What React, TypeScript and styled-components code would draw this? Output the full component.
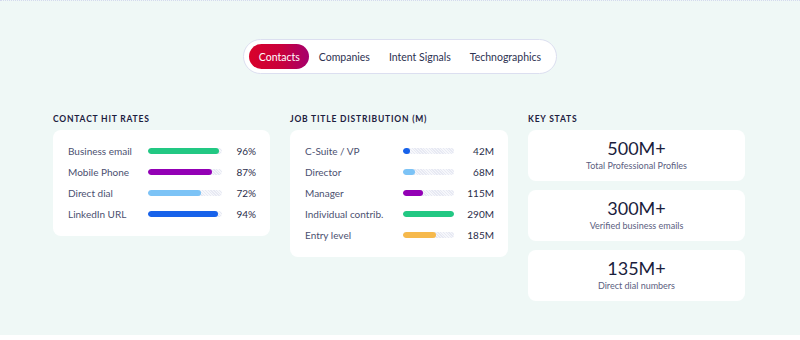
import React from 'react'
import styled, { createGlobalStyle } from 'styled-components'

const GlobalStyle = createGlobalStyle`
  * { box-sizing: border-box; }
  body {
    margin: 0;
    background: #ffffff;
    font-family: Lato, "Noto Sans", Arial, sans-serif;
  }
`

const Page = styled.div`
  height: 335px;
  background: #eff8f6;
  border-top: 1px dotted #d4d9ee;
  padding-top: 38px;
  display: flex;
  flex-direction: column;
  align-items: center;
`

const TabBar = styled.div`
  display: flex;
  align-items: center;
  height: 35px;
  padding: 0 5px;
  background: #ffffff;
  border: 1px solid #dcdff0;
  border-radius: 18px;
`

const Tab = styled.div<{ $active?: boolean }>`
  height: 25px;
  padding: 0 9.5px;
  display: flex;
  align-items: center;
  border-radius: 13px;
  font-size: 10.5px;
  color: ${p => (p.$active ? '#ffffff' : '#2e3352')};
  background: ${p => (p.$active ? 'linear-gradient(90deg, #d8022a 0%, #c8003c 55%, #a5006c 100%)' : 'transparent')};
`

const Columns = styled.div`
  display: grid;
  grid-template-columns: 217px 218px 217px;
  gap: 20px;
  margin-top: 40px;
  margin-left: -2px;
`

const Column = styled.div`
  display: flex;
  flex-direction: column;
`

const Title = styled.div`
  font-size: 8.5px;
  font-weight: 700;
  letter-spacing: 0.8px;
  color: #1c2040;
  text-transform: uppercase;
  height: 16px;
  line-height: 10px;
`

const Card = styled.div<{ $labelWidth: number }>`
  background: #ffffff;
  border-radius: 8px;
  padding: 16px 14px 17px 15px;
  display: grid;
  grid-template-columns: ${p => p.$labelWidth}px 1fr auto;
  row-gap: 11px;
  align-items: center;
`

const Label = styled.div`
  font-size: 10px;
  color: #4b5070;
  line-height: 10px;
`

const Track = styled.div<{ $width: number }>`
  width: ${p => p.$width}px;
  height: 6px;
  border-radius: 3px;
  background: repeating-linear-gradient(45deg, #e7e9f3 0 1px, #f6f7fb 1px 2px);
  overflow: hidden;
`

const Fill = styled.div<{ $color: string }>`
  height: 100%;
  border-radius: 3px;
  background: ${p => p.$color};
`

const Value = styled.div`
  font-size: 10px;
  color: #2a2e4a;
  text-align: right;
  line-height: 10px;
`

const Stats = styled.div`
  display: flex;
  flex-direction: column;
  gap: 9px;
`

const StatCard = styled.div`
  background: #ffffff;
  border-radius: 8px;
  height: 51px;
  padding-top: 8px;
  display: flex;
  flex-direction: column;
  align-items: center;
  gap: 2px;
`

const StatNumber = styled.div`
  font-size: 18px;
  color: #1a1d3d;
  line-height: 20px;
`

const StatLabel = styled.div`
  font-size: 9px;
  line-height: 11px;
  color: #5b6080;
`

const hitRates = [
  { label: 'Business email', pct: 96, color: '#22c883', value: '96%' },
  { label: 'Mobile Phone', pct: 87, color: '#9300b5', value: '87%' },
  { label: 'Direct dial', pct: 72, color: '#7cc3f6', value: '72%' },
  { label: 'LinkedIn URL', pct: 94, color: '#1762ea', value: '94%' },
]

const jobTitles = [
  { label: 'C-Suite / VP', pct: 14, color: '#1762ea', value: '42M' },
  { label: 'Director', pct: 23, color: '#7cc3f6', value: '68M' },
  { label: 'Manager', pct: 40, color: '#9300b5', value: '115M' },
  { label: 'Individual contrib.', pct: 100, color: '#22c883', value: '290M' },
  { label: 'Entry level', pct: 64, color: '#f6b94c', value: '185M' },
]

const stats = [
  { num: '500M+', label: 'Total Professional Profiles' },
  { num: '300M+', label: 'Verified business emails' },
  { num: '135M+', label: 'Direct dial numbers' },
]

type Row = { label: string; pct: number; color: string; value: string }

const BarCard = ({ rows, labelWidth, trackWidth }: { rows: Row[]; labelWidth: number; trackWidth: number }) => (
  <Card $labelWidth={labelWidth}>
    {rows.map(r => (
      <React.Fragment key={r.label}>
        <Label>{r.label}</Label>
        <Track $width={trackWidth}>
          <Fill $color={r.color} style={{ width: `${r.pct}%` }} />
        </Track>
        <Value>{r.value}</Value>
      </React.Fragment>
    ))}
  </Card>
)

const App = () => {
  return (
    <>
      <GlobalStyle />
      <Page>
        <TabBar>
          <Tab $active>Contacts</Tab>
          <Tab>Companies</Tab>
          <Tab>Intent Signals</Tab>
          <Tab>Technographics</Tab>
        </TabBar>
        <Columns>
          <Column>
            <Title>Contact hit rates</Title>
            <BarCard rows={hitRates} labelWidth={80} trackWidth={74} />
          </Column>
          <Column>
            <Title>Job title distribution (M)</Title>
            <BarCard rows={jobTitles} labelWidth={98} trackWidth={51} />
          </Column>
          <Column>
            <Title>Key stats</Title>
            <Stats>
              {stats.map(s => (
                <StatCard key={s.num}>
                  <StatNumber>{s.num}</StatNumber>
                  <StatLabel>{s.label}</StatLabel>
                </StatCard>
              ))}
            </Stats>
          </Column>
        </Columns>
      </Page>
    </>
  )
}

export default App
